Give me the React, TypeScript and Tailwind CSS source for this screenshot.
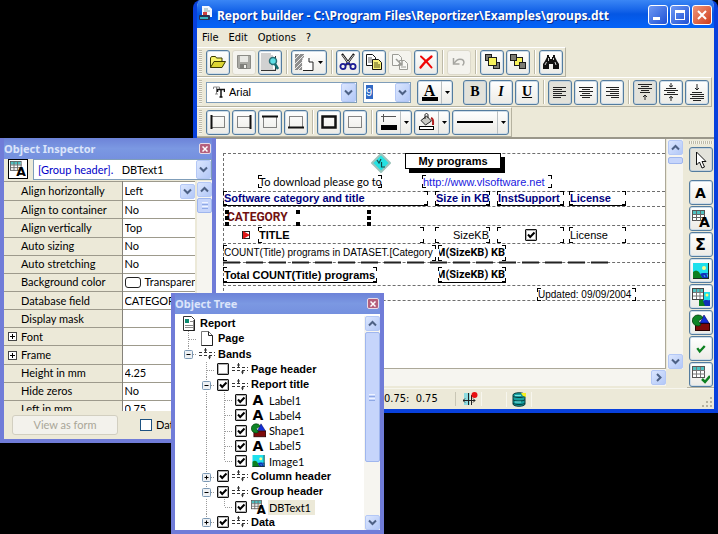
import type { ReactNode } from "react";
import { clsx } from "clsx";

/* ---------- icons ---------- */

const Chevron = ({ dir = "down" }: { dir?: "down" | "up" | "right" }) => (
  <svg viewBox="0 0 9 9" className="h-[9px] w-[9px]" fill="none" stroke="#4d6185" strokeWidth="2">
    {dir === "down" && <path d="M1 2.500 4.500 6 8 2.500" />}
    {dir === "up" && <path d="M1 6.500 4.500 3 8 6.500" />}
    {dir === "right" && <path d="M3 1 6.500 4.500 3 8" />}
  </svg>
);

const AppIcon = () => (
  <svg viewBox="0 0 14 16" className="h-4 w-3.5">
    <path d="M3 0h7l3 3v8H3z" fill="#f4f8ff" />
    <path d="M5 3h4M5 5h6" stroke="#8aa" />
    <rect x="0" y="9" width="11" height="5" rx="1" fill="#2a3350" />
    <rect x="1" y="11" width="8" height="2" fill="#36b5c0" />
    <rect x="4" y="6" width="4" height="3" fill="#d04040" />
  </svg>
);

const OpenIcon = () => (
  <svg viewBox="0 0 18 16" className="h-4 w-[18px]" stroke="#3a3a00" strokeWidth="1">
    <path d="M1.500 13.500V4l1-1.500h4l1 1.500h5.500v3" fill="#f7f36b" />
    <path d="M1.500 13.500 5 7.500h11.500L13 13.500z" fill="#dcd532" />
  </svg>
);

const SaveIcon = () => (
  <svg viewBox="0 0 16 16" className="h-4 w-4">
    <path d="M1.500 1.500h13v13h-12l-1-1z" fill="#a9a9a4" stroke="#8b8b86" />
    <rect x="4" y="2" width="8" height="6" fill="#e8e8e4" />
    <rect x="4" y="10" width="7" height="5" fill="#7f7f7b" />
    <rect x="8" y="11" width="2" height="3" fill="#f2f2ee" />
  </svg>
);

const PreviewIcon = () => (
  <svg viewBox="0 0 20 20" className="h-5 w-5">
    <path d="M1 1h11l3 3v14H1z" fill="#fff" />
    <path d="M1 2h10M1 4h12M1 6h12M1 8h9M1 10h8M1 12h9M1 14h12M1 16h12M1 18h14" stroke="#a3a3a3" />
    <path d="M15.500 4v14M1 18.500h15" stroke="#333" />
    <circle cx="13" cy="9" r="3.500" fill="#5ee0e6" stroke="#2b6f76" strokeWidth="1.500" />
    <path d="m15 12 3 5" stroke="#146b70" strokeWidth="2.500" />
  </svg>
);

const PagesIcon = () => (
  <svg viewBox="0 0 20 18" className="h-[18px] w-5">
    <path d="M1 1h9v6H8v10H1z" fill="#8e8e8e" />
    <path d="m1 6 5-5M1 11 10 2M1 16l9-9M4 17l5-5" stroke="#e9e9e9" />
    <path d="M9 5h6l4 4v8H9z" fill="#fff" stroke="#fff" />
    <path d="M15 5v4h4v8.500H9" fill="none" stroke="#222" />
  </svg>
);

const CutIcon = () => (
  <svg viewBox="0 0 18 18" className="h-[18px] w-[18px]" fill="none">
    <path d="m3 1 8 11M15 1 7 12" stroke="#111" strokeWidth="2.200" />
    <path d="m3.500 2 6 8M14.500 2l-6 8" stroke="#fff" strokeWidth=".8" />
    <ellipse cx="4" cy="13.500" rx="2.600" ry="2.600" stroke="#1c1c96" strokeWidth="1.800" />
    <ellipse cx="14" cy="13.500" rx="2.600" ry="2.600" stroke="#1c1c96" strokeWidth="1.800" />
    <path d="m6 12 3-2 3 2" stroke="#1c1c96" strokeWidth="1.500" />
  </svg>
);

const CopyIcon = () => (
  <svg viewBox="0 0 18 18" className="h-[18px] w-[18px]" stroke="#111">
    <path d="M1.500 1.500h6l3 3v8h-9z" fill="#fff" />
    <path d="M3 5h4M3 7h4M3 9h4" stroke="#666" />
    <path d="M7.500 6.500h6l3 3v7h-9z" fill="#f8f07a" />
    <path d="M9 10h4M9 12h6M9 14h6" stroke="#55551a" />
  </svg>
);

const PasteIcon = () => (
  <svg viewBox="0 0 18 18" className="h-[18px] w-[18px]" stroke="#9b9b96">
    <path d="M1.500 1.500h6l3 3v8h-9z" fill="#f8f8f5" />
    <path d="M8.500 7.500h5l3 3v6h-8z" fill="#f8f8f5" />
    <path d="m5 6 6 6M11 8v4H7" strokeWidth="1.500" fill="none" />
    <path d="M10 14h5" />
  </svg>
);

const DeleteIcon = () => (
  <svg viewBox="0 0 16 16" className="h-4 w-4" stroke="#f00505" fill="none" strokeLinecap="round">
    <path d="M3 2.500C6 5 10 9 13.500 13.500" strokeWidth="2" />
    <path d="M13.500 2.500C9 6 5 10 2.500 13.500" strokeWidth="2.300" />
  </svg>
);

const UndoIcon = () => (
  <svg viewBox="0 0 14 12" className="h-3 w-3.5" stroke="#a5a5a0" fill="none" strokeWidth="1.500">
    <path d="M1.500 2v6h6" />
    <path d="M2 7.500C4 4 7 2.500 10 3.500c2.500 1 2.500 4 .5 6" />
  </svg>
);

const FrontIcon = () => (
  <svg viewBox="0 0 18 18" className="h-[18px] w-[18px]" stroke="#1c1c1c">
    <rect x="2.500" y="1.500" width="6" height="6" fill="#7b7b73" />
    <rect x="10.500" y="9.500" width="6" height="6" fill="#7b7b73" />
    <rect x="5.500" y="4.500" width="8" height="8" fill="#f8f35c" />
  </svg>
);

const BackIcon = () => (
  <svg viewBox="0 0 18 18" className="h-[18px] w-[18px]" stroke="#1c1c1c">
    <rect x="5.500" y="4.500" width="8" height="8" fill="#f8f35c" />
    <rect x="1.500" y="1.500" width="6" height="6" fill="#7b7b73" />
    <rect x="10.500" y="9.500" width="6" height="6" fill="#7b7b73" />
  </svg>
);

const FindIcon = () => (
  <svg viewBox="0 0 16 14" className="h-3.5 w-4">
    <path d="M4 0h2v2h1v2h2V2h1V0h2v2l2 4 2 3v5h-6V9H6v5H0V9l2-3 2-4z" fill="#111" />
    <path d="M3.500 7 2 10M12 7l1 3M5.500 3v3M10.500 3v2" stroke="#cfcfcf" />
  </svg>
);

const TrueTypeIcon = () => (
  <svg viewBox="0 0 12 12" className="h-3 w-3">
    <path d="M.5 3V1h6v2M3.500 1v7M2 8h3" stroke="#888" fill="none" />
    <path d="M4.500 6V3.500h7V6M8 3.500V11M6.500 11h3" stroke="#111" strokeWidth="1.500" fill="none" />
  </svg>
);

type FrameSide = "left" | "right" | "top" | "bottom" | "all" | "none";

const FrameIcon = ({ side }: { side: FrameSide }) => (
  <svg viewBox="0 0 16 14" className="h-3.5 w-4" fill="none" stroke="#111">
    {side === "all" ? (
      <rect x="1.500" y="1.500" width="13" height="11" strokeWidth="2.500" />
    ) : (
      <rect x="1.500" y="1.500" width="13" height="11" strokeDasharray="1 1" />
    )}
    {side === "left" && <path d="M1.500 0v14" strokeWidth="2" />}
    {side === "right" && <path d="M14.500 0v14" strokeWidth="2" />}
    {side === "top" && <path d="M0 1.500h16" strokeWidth="2" />}
    {side === "bottom" && <path d="M0 12.500h16" strokeWidth="2" />}
  </svg>
);

const LineColorIcon = () => (
  <svg viewBox="0 0 18 18" className="h-[18px] w-[18px]">
    <path d="M3.500 1v8M1 3.500h15" stroke="#555" />
    <rect x="1" y="12" width="16" height="5" fill="#000" />
  </svg>
);

const FillIcon = () => (
  <svg viewBox="0 0 18 18" className="h-[18px] w-[18px]">
    <path d="M3 7.500 8.500 3l5 5-6 4z" fill="#c9c9c4" stroke="#222" />
    <path d="M7 6V2c0-2 3-2 3 0v3" fill="none" stroke="#222" />
    <path d="M13 5c3 1 2 4 2 7" fill="none" stroke="#b02020" strokeWidth="2" />
    <rect x="1.500" y="13.500" width="14" height="3" fill="#fff" stroke="#000" />
  </svg>
);

const AlignIcon = ({ side }: { side: "left" | "center" | "right" }) => (
  <svg viewBox="0 0 14 12" className="h-3 w-3.5" stroke="#222" fill="none">
    {side === "left" && <path d="M0 1.500h13M0 3.500h9M0 5.500h13M0 7.500h9M0 9.500h13M0 11.500h8" />}
    {side === "center" && <path d="M0 1.500h14M3 3.500h8M0 5.500h14M3 7.500h8M1 9.500h12M3 11.500h8" />}
    {side === "right" && <path d="M1 1.500h13M5 3.500h9M1 5.500h13M5 7.500h9M1 9.500h13M6 11.500h8" />}
  </svg>
);

const VAlignIcon = ({ side }: { side: "top" | "middle" | "bottom" }) => (
  <svg viewBox="0 0 14 18" className="h-[18px] w-3.5" stroke="#222" fill="none">
    {side === "top" && (
      <>
        <path d="M0 1.500h14M3 3.500h8M0 5.500h14M3 7.500h8M2 9.500h10" />
        <path d="M7 12v5M5 14l2-2 2 2" />
      </>
    )}
    {side === "middle" && (
      <>
        <path d="M2 5.500h10M0 7.500h14M3 9.500h8M0 11.500h14" />
        <path d="M7 0v4M5 2.500l2 1.500 2-1.500M7 18v-5M5 15l2-1.500 2 1.500" />
      </>
    )}
    {side === "bottom" && (
      <>
        <path d="M7 1v6M5 5l2 2 2-2" />
        <path d="M2 9.500h10M0 11.500h14M2 13.500h12M0 15.500h14M3 17.500h8" />
      </>
    )}
  </svg>
);

const PointerIcon = () => (
  <svg viewBox="0 0 12 18" className="h-[18px] w-3">
    <path d="M1.500 1v13l3-3 2.500 6 2.500-1L7 10.500h4z" fill="#fff" stroke="#111" />
  </svg>
);

const DbTextIcon = ({ className }: { className?: string }) => (
  <svg viewBox="0 0 18 18" className={className}>
    <rect x=".5" y=".5" width="12" height="10" fill="#fff" stroke="#555" />
    <rect x="1" y="1" width="11" height="3" fill="#4fc0c0" />
    <path d="M1 4.500h12M1 7.500h12M4.500 1v10M8.500 1v10" stroke="#666" />
    <text x="7" y="17" fontFamily="DejaVu Sans, sans-serif" fontWeight="bold" fontSize="14">A</text>
  </svg>
);

const ImageIcon = ({ className }: { className?: string }) => (
  <svg viewBox="0 0 16 16" className={className}>
    <rect width="16" height="16" fill="#1fe0ec" />
    <circle cx="11" cy="5" r="2" fill="#fbfb90" />
    <path d="M0 9c2-2 4-2 6 0l4 7H0z" fill="#0b8020" />
    <path d="M7 11c3-2 6 0 9-1v6h-6z" fill="#1330b8" />
    <path d="m11 12 1 2m2-3 1 3" stroke="#2cc8e8" />
    <path d="M0 15.500h16M15.500 0v16" stroke="#1a3020" />
  </svg>
);

const DbImageIcon = () => (
  <svg viewBox="0 0 18 18" className="h-[18px] w-[18px]">
    <rect x="7" y="4" width="11" height="14" fill="#1fe0ec" />
    <path d="M7 12c2-2 4-1 5 2l2 4H7z" fill="#0b8020" />
    <path d="M11 13c3-2 4 0 7-1v6h-5z" fill="#1330b8" />
    <circle cx="15" cy="7" r="1.500" fill="#fbfb70" />
    <rect x=".5" y=".5" width="11" height="11" fill="#fff" stroke="#444" />
    <rect x="1" y="1" width="10" height="3" fill="#4fc0c0" />
    <path d="M1 4.500h10M1 8h10M4.500 1v10M8 1v10" stroke="#777" />
  </svg>
);

const ShapeIcon = ({ className }: { className?: string }) => (
  <svg viewBox="0 0 18 18" className={className}>
    <rect x="3.500" y="9.500" width="14" height="7" fill="#7d0a0a" stroke="#2a0000" />
    <path d="m12 1 5 8H8z" fill="#1230d8" stroke="#000060" strokeWidth=".6" />
    <path d="M6 1a5.500 5.500 0 1 0 3 10L6.500 7 11 3.500A5.500 5.500 0 0 0 6 1z" fill="#0e8526" stroke="#033b0c" strokeWidth=".8" />
  </svg>
);

const CheckIcon = () => (
  <svg viewBox="0 0 12 12" className="h-2.5 w-2.5" fill="none" stroke="#0c8020" strokeWidth="2.800">
    <path d="m1.500 5 3 4L10.500 2.500" />
  </svg>
);

const DbCheckIcon = () => (
  <svg viewBox="0 0 18 18" className="h-[18px] w-[18px]">
    <rect x=".5" y=".5" width="12" height="11" fill="#fff" stroke="#555" />
    <rect x="1" y="1" width="11" height="3" fill="#4fc0c0" />
    <path d="M1 4.500h12M1 8h12M4.500 1v10M8.500 1v10" stroke="#777" />
    <path d="m10 13 3 3 5-6" fill="none" stroke="#0c8020" strokeWidth="2.500" />
  </svg>
);

const ReportIcon = () => (
  <svg viewBox="0 0 12 15" className="h-[15px] w-3">
    <path d="M.5.5h8l3 3v11H.5z" fill="#fff" stroke="#333" />
    <rect x="2" y="3" width="4" height="4" fill="#0c8a70" />
    <path d="M7 5.500h3M2 9.500h8M2 11.500h8" stroke="#888" />
    <path d="M11 4v11H1" stroke="#111" fill="none" />
  </svg>
);

const PageIcon = () => (
  <svg viewBox="0 0 12 15" className="h-[15px] w-3">
    <path d="M.5.5h7l4 4v10H.5z" fill="#fff" stroke="#777" />
    <path d="M7.500.5v4h4v10H.5" stroke="#222" fill="none" />
  </svg>
);

const BandIcon = () => (
  <svg viewBox="0 0 16 12" className="h-3 w-4" stroke="#333" fill="none">
    <path d="M0 4.500h16M0 7.500h16" strokeDasharray="3 2" />
    <path d="M6.500 0v5M5 2h3M10.500 7v4" />
    <path d="M9 8.500h3l-1.500 3z" fill="#333" stroke="none" />
  </svg>
);

const LetterA = () => <span className="font-['DejaVu_Sans'] text-sm leading-none font-bold">A</span>;

/* ---------- shared controls ---------- */

const Checkbox = ({ id, checked = false, label }: { id: string; checked?: boolean; label: string }) => (
  <span className="grid h-3 w-3 shrink-0">
    <input
      id={id}
      type="checkbox"
      aria-label={label}
      defaultChecked={checked}
      className="peer col-start-1 row-start-1 m-0 h-3 w-3 appearance-none rounded-[1px] border border-[#111] bg-white shadow-[inset_0_0_0_1px_#b0b0b0]"
    />
    <svg viewBox="0 0 12 12" className="pointer-events-none invisible col-start-1 row-start-1 h-3 w-3 peer-checked:visible">
      <path d="m3 5.500 2.200 2.500L9.500 3.500" fill="none" stroke="#000" strokeWidth="2" />
    </svg>
  </span>
);

type ToolState = "normal" | "pressed" | "disabled";

const ToolButton = ({ label, state = "normal", children }: { label: string; state?: ToolState; children: ReactNode }) => (
  <button
    type="button"
    aria-label={label}
    disabled={state === "disabled"}
    className={clsx(
      "flex h-[25px] w-6 shrink-0 items-center justify-center rounded-[3px]",
      state === "normal" && "border border-[#547c9f] bg-linear-to-b from-white to-[#ecebe6] shadow-[inset_0_0_0_1px_#cfdde8]",
      state === "pressed" && "border border-[#547c9f] bg-[#e3e2da] shadow-[inset_0_0_0_1px_#c6d2da]",
      state === "disabled" && "border border-[#dcd9cb] bg-[#f4f3ee]",
    )}
  >
    {children}
  </button>
);

const SplitButton = ({ label, width, divided = true, children }: { label: string; width: string; divided?: boolean; children: ReactNode }) => (
  <button
    type="button"
    aria-label={label}
    className={clsx(
      "flex h-[25px] shrink-0 items-stretch rounded-[3px] border border-[#547c9f] bg-linear-to-b from-white to-[#ecebe6] shadow-[inset_0_0_0_1px_#cfdde8]",
      width,
    )}
  >
    <span className="flex flex-1 items-center justify-center">{children}</span>
    <span className={clsx("flex w-[11px] items-center justify-center", divided && "border-l border-[#b9bfc2]")}>
      <svg viewBox="0 0 5 3" className="h-[3px] w-[5px]">
        <path d="M0 0h5L2.500 3z" />
      </svg>
    </span>
  </button>
);

const Separator = () => <span className="mr-px ml-[2px] h-6 w-[2px] border-r border-l border-r-white border-l-[#bdbaa8]" />;

const Grip = () => (
  <span className="mr-[2px] h-6 w-[3px] bg-[repeating-linear-gradient(180deg,#bebba9_0_1px,#f5f4ec_1px_2px)]" />
);

const Toolbar = ({ label, children }: { label: string; children: ReactNode }) => (
  <div
    role="toolbar"
    aria-label={label}
    className="flex h-[30px] w-fit items-center gap-[2px] border-t border-r border-b border-t-white border-r-[#b5b2a0] border-b-[#b5b2a0] pr-[2px] pl-[2px]"
  >
    <Grip />
    {children}
  </div>
);

const DropArrow = ({ label, className }: { label: string; className?: string }) => (
  <button
    type="button"
    aria-label={label}
    className={clsx(
      "flex w-[15px] shrink-0 items-center justify-center rounded-[2px] border border-[#b4c8f6] bg-linear-to-br from-[#dbe6fe] to-[#b3c8f7]",
      className,
    )}
  >
    <Chevron />
  </button>
);

const ScrollButton = ({ dir }: { dir: "up" | "down" | "right" }) => (
  <button
    type="button"
    aria-label={`Scroll ${dir}`}
    className="flex h-[15px] w-[15px] shrink-0 items-center justify-center rounded-[2px] border border-[#b4c8f6] bg-linear-to-br from-[#dbe6fe] to-[#b3c8f7]"
  >
    <Chevron dir={dir} />
  </button>
);

const ScrollThumb = ({ height }: { height: string }) => (
  <div className={clsx("flex w-[15px] flex-col items-center justify-center gap-px rounded-[2px] border border-[#9fb6ee] bg-[#c6d5fb]", height)}>
    {height !== "h-[7px]" && (
      <>
        <span className="h-px w-1.5 bg-[#eef3ff]" />
        <span className="h-px w-1.5 bg-[#8fa9e6]" />
        <span className="h-px w-1.5 bg-[#eef3ff]" />
        <span className="h-px w-1.5 bg-[#8fa9e6]" />
      </>
    )}
  </div>
);

const ToolWindow = ({ title, className, children }: { title: string; className: string; children: ReactNode }) => (
  <section className={clsx("absolute flex flex-col border-x-4 border-b-4 border-[#707cd8] bg-[#ece9d8] font-['Lato','Liberation_Sans',sans-serif]", className)}>
    <header className="flex h-[21px] shrink-0 items-center justify-between bg-linear-to-b from-[#6d83d8] via-[#7b98e2] to-[#7590df] pr-px">
      <h2 className="font-['Noto_Sans',sans-serif] text-[11px] font-bold text-[#dbe4fa]">{title}</h2>
      <button
        type="button"
        aria-label={`Close ${title}`}
        className="flex h-[11px] w-3 items-center justify-center rounded-[2px] border border-[#e8dbe8] bg-[#b5607c]"
      >
        <svg viewBox="0 0 6 6" className="h-1.5 w-1.5" stroke="#fff" strokeWidth="1.500">
          <path d="m.5.5 5 5M5.500.5l-5 5" />
        </svg>
      </button>
    </header>
    {children}
  </section>
);

/* ---------- main window ---------- */

const TitleBar = () => (
  <header className="flex h-7 items-center gap-1 bg-linear-to-b from-[#3a86f5] via-[#0557e4] to-[#0463f8] pr-[2px] pl-[2px]">
    <AppIcon />
    <h1 className="min-w-0 flex-1 pt-1 font-['Noto_Sans',sans-serif] text-xs font-bold whitespace-nowrap text-white [text-shadow:1px_1px_#0a2f8f]">
      Report builder - C:\Program Files\Reportizer\Examples\groups.dtt
    </h1>
    <div className="flex shrink-0 gap-[2px] pt-px">
      <button type="button" aria-label="Minimize" className="flex h-5 w-5 items-end justify-start rounded-[3px] border border-white bg-linear-to-br from-[#6f98f3] to-[#1f4fd4] p-1">
        <span className="h-[3px] w-[7px] bg-white" />
      </button>
      <button type="button" aria-label="Maximize" className="flex h-5 w-5 items-center justify-center rounded-[3px] border border-white bg-linear-to-br from-[#6f98f3] to-[#1f4fd4]">
        <span className="h-2.5 w-2.5 border border-t-[3px] border-white" />
      </button>
      <button type="button" aria-label="Close" className="flex h-5 w-5 items-center justify-center rounded-[3px] border border-white bg-linear-to-br from-[#ee9478] to-[#cf3a14]">
        <svg viewBox="0 0 10 10" className="h-2.5 w-2.5" stroke="#fff" strokeWidth="2">
          <path d="m1 1 8 8M9 1 1 9" />
        </svg>
      </button>
    </div>
  </header>
);

const Toolbars = () => (
  <div>
    <Toolbar label="Standard">
      <ToolButton label="Open"><OpenIcon /></ToolButton>
      <ToolButton label="Save" state="disabled"><SaveIcon /></ToolButton>
      <ToolButton label="Preview"><PreviewIcon /></ToolButton>
      <Separator />
      <SplitButton label="Page" width="w-9" divided={false}><PagesIcon /></SplitButton>
      <Separator />
      <ToolButton label="Cut"><CutIcon /></ToolButton>
      <ToolButton label="Copy"><CopyIcon /></ToolButton>
      <ToolButton label="Paste" state="disabled"><PasteIcon /></ToolButton>
      <ToolButton label="Delete"><DeleteIcon /></ToolButton>
      <Separator />
      <ToolButton label="Undo" state="disabled"><UndoIcon /></ToolButton>
      <Separator />
      <ToolButton label="Bring to front"><FrontIcon /></ToolButton>
      <ToolButton label="Send to back"><BackIcon /></ToolButton>
      <Separator />
      <ToolButton label="Find"><FindIcon /></ToolButton>
    </Toolbar>

    <Toolbar label="Formatting">
      <div className="mr-1 flex h-[21px] w-[151px] items-center gap-1 border border-[#7f9db9] bg-white pl-1.5">
        <TrueTypeIcon />
        <input aria-label="Font" defaultValue="Arial" className="min-w-0 flex-1 outline-none" />
        <DropArrow label="Choose font" className="h-[19px]" />
      </div>
      <div className="mr-1 flex h-[21px] w-12 items-center justify-between border border-[#7f9db9] bg-white pl-[2px]">
        <input aria-label="Font size" defaultValue="9" className="h-3.5 w-[7px] bg-[#316ac5] text-white outline-none" />
        <DropArrow label="Choose size" className="h-[19px]" />
      </div>
      <SplitButton label="Font color" width="w-9">
        <span className="flex flex-col items-center">
          <span className="font-['Liberation_Serif',serif] text-base leading-[13px] font-bold">A</span>
          <span className="h-1 w-4 bg-black" />
        </span>
      </SplitButton>
      <span className="w-1.5" />
      <ToolButton label="Bold" state="pressed"><span className="font-['Liberation_Serif',serif] text-sm font-bold">B</span></ToolButton>
      <ToolButton label="Italic"><span className="font-['Liberation_Serif',serif] text-sm font-bold italic">I</span></ToolButton>
      <ToolButton label="Underline"><span className="font-['Liberation_Serif',serif] text-sm font-bold underline">U</span></ToolButton>
      <Separator />
      <ToolButton label="Align left" state="pressed"><AlignIcon side="left" /></ToolButton>
      <ToolButton label="Align center"><AlignIcon side="center" /></ToolButton>
      <ToolButton label="Align right"><AlignIcon side="right" /></ToolButton>
      <Separator />
      <ToolButton label="Align top" state="pressed"><VAlignIcon side="top" /></ToolButton>
      <ToolButton label="Align middle"><VAlignIcon side="middle" /></ToolButton>
      <ToolButton label="Align bottom"><VAlignIcon side="bottom" /></ToolButton>
    </Toolbar>

    <Toolbar label="Frame">
      <ToolButton label="Left frame"><FrameIcon side="left" /></ToolButton>
      <ToolButton label="Right frame"><FrameIcon side="right" /></ToolButton>
      <ToolButton label="Top frame"><FrameIcon side="top" /></ToolButton>
      <ToolButton label="Bottom frame"><FrameIcon side="bottom" /></ToolButton>
      <Separator />
      <ToolButton label="Full frame"><FrameIcon side="all" /></ToolButton>
      <ToolButton label="No frame"><FrameIcon side="none" /></ToolButton>
      <Separator />
      <SplitButton label="Line color" width="w-9"><LineColorIcon /></SplitButton>
      <SplitButton label="Fill color" width="w-9"><FillIcon /></SplitButton>
      <SplitButton label="Line width" width="w-[57px]"><span className="h-[2px] w-9 bg-black" /></SplitButton>
    </Toolbar>
  </div>
);

/* Report items sit at free positions on the designer canvas. */

const Band = ({ at }: { at: string }) => (
  <span className={clsx("absolute right-0 left-[26px] border-t border-dashed border-[#6e6e6e]", at)} />
);

const Field = ({ at, underline = false, children }: { at: string; underline?: boolean; children: ReactNode }) => (
  <div className={clsx("absolute flex items-center px-px whitespace-nowrap", underline && "border-b border-black", at)}>
    <span className="absolute top-0 left-0 h-1 w-1 border-t border-l border-black" />
    <span className="absolute top-0 right-0 h-1 w-1 border-t border-r border-black" />
    <span className="absolute bottom-0 left-0 h-1 w-1 border-b border-l border-black" />
    <span className="absolute right-0 bottom-0 h-1 w-1 border-r border-b border-black" />
    {children}
  </div>
);

const Handle = ({ at }: { at: string }) => <span className={clsx("absolute h-1 w-1 bg-black", at)} />;

/* The expression is wider than its field, so its start is hidden. */
const SizeTotal = () => (
  <b className="flex min-w-0 flex-1 justify-end overflow-hidden font-['Roboto',sans-serif]">
    <span>M(SizeKB) KB</span>
  </b>
);

const Canvas = () => (
  <div className="relative h-[230px] min-w-0 flex-1 overflow-hidden border-r border-b border-[#aca899] bg-white font-['Liberation_Sans',sans-serif] text-[11px]">
    <span className="absolute top-[14px] left-[26px] h-[148px] border-l border-dashed border-[#6e6e6e]" />
    <Band at="top-[14px]" />
    <Band at="top-[52px]" />
    <Band at="top-[67px]" />
    <Band at="top-[86px]" />
    <Band at="top-[104px]" />
    <Band at="top-[123px]" />
    <Band at="top-[146px]" />
    <Band at="top-[161px]" />

    <svg viewBox="0 0 20 20" className="absolute top-[14px] left-[174px] h-5 w-5">
      <path d="M10 1 19 10 10 19 1 10z" fill="#25e2e2" stroke="#9cc4bc" strokeWidth="2" strokeLinejoin="round" />
      <path d="m6 7 2 3 2-4M10.500 9v5h3.500" fill="none" stroke="#134a4a" strokeWidth="1.200" />
    </svg>
    <div className="absolute top-[14px] left-[208px] flex h-4 w-24 items-center justify-center border border-black bg-white font-bold shadow-[4px_4px_#000]">
      My programs
    </div>

    <Field at="top-[36px] left-[61px] h-[13px] w-[124px]">
      <span className="font-['Lato',sans-serif]">To download please go to</span>
    </Field>
    <Field at="top-[36px] left-[225px] h-[13px] w-[130px]">
      <a href="http://www.vlsoftware.net" className="text-[#2020e0]">http://www.vlsoftware.net</a>
    </Field>

    <Field at="top-[52px] left-[26px] h-[15px] w-[205px]" underline><b className="text-[#000080]">Software category and title</b></Field>
    <Field at="top-[52px] left-[238px] h-[15px] w-[55px]" underline><b className="text-[#000080]">Size in KB</b></Field>
    <Field at="top-[52px] left-[300px] h-[15px] w-[67px]" underline><b className="text-[#000080]">InstSupport</b></Field>
    <Field at="top-[52px] left-[372px] h-[15px] w-[57px]" underline><b className="text-[#000080]">License</b></Field>

    <div className="absolute top-[70px] left-[30px] flex h-4 items-center font-['Roboto',sans-serif] text-xs font-bold text-[#701010]">CATEGORY</div>
    <Handle at="top-[71px] left-[28px]" />
    <Handle at="top-[77px] left-[28px]" />
    <Handle at="top-[83px] left-[28px]" />
    <Handle at="top-[71px] left-[99px]" />
    <Handle at="top-[83px] left-[99px]" />
    <Handle at="top-[71px] left-[170px]" />
    <Handle at="top-[77px] left-[170px]" />
    <Handle at="top-[83px] left-[170px]" />

    <svg viewBox="0 0 8 8" className="absolute top-[92px] left-[45px] h-2 w-2">
      <rect x=".5" y=".5" width="7" height="7" fill="#fff" stroke="#222" />
      <path d="m1 0 7 4-7 4z" fill="#e01818" />
    </svg>
    <Field at="top-[88px] left-[61px] h-4 w-[166px]"><b>TITLE</b></Field>
    <Field at="top-[88px] left-[238px] h-4 w-[55px] justify-end">SizeKB</Field>
    <Field at="top-[88px] left-[300px] h-4 w-[67px] justify-center">
      <Checkbox id="inst-support" label="InstSupport" checked />
    </Field>
    <Field at="top-[88px] left-[372px] h-4 w-[57px]">License</Field>

    <Field at="top-[106px] left-[26px] h-4 w-[213px]">
      <span className="text-[10px]">COUNT(Title) programs in DATASET.[Category</span>
    </Field>
    <Field at="top-[106px] left-[241px] h-4 w-[68px]"><SizeTotal /></Field>
    <svg className="absolute top-[122px] left-[26px] h-[3px] w-[390px]" stroke="#222">
      <path d="M0 1.500h390" strokeWidth="2" strokeDasharray="17 6" />
    </svg>
    <Field at="top-[128px] left-[26px] h-4 w-[154px]" underline><b>Total COUNT(Title) programs</b></Field>
    <Field at="top-[128px] left-[241px] h-4 w-[68px]" underline><SizeTotal /></Field>
    <Field at="top-[149px] left-[340px] h-[13px] w-[99px]">
      <span className="text-[10px]">Updated: 09/09/2004</span>
    </Field>
  </div>
);

const Palette = () => (
  <div role="toolbar" aria-label="Report items" className="ml-1 flex w-[27px] shrink-0 flex-col items-center gap-px border-b border-[#b5b2a0] pt-[2px]">
    <span className="mb-[2px] h-[3px] w-6 bg-[repeating-linear-gradient(90deg,#bebba9_0_1px,#f5f4ec_1px_2px)]" />
    <ToolButton label="Select" state="pressed"><PointerIcon /></ToolButton>
    <span className="h-1.5" />
    <ToolButton label="Label"><LetterA /></ToolButton>
    <ToolButton label="Database text"><DbTextIcon className="h-[18px] w-[18px]" /></ToolButton>
    <ToolButton label="Expression"><span className="font-['DejaVu_Sans',sans-serif] text-base leading-none font-bold">Σ</span></ToolButton>
    <ToolButton label="Image"><ImageIcon className="h-4 w-4" /></ToolButton>
    <ToolButton label="Database image"><DbImageIcon /></ToolButton>
    <ToolButton label="Shape"><ShapeIcon className="h-[18px] w-[18px]" /></ToolButton>
    <ToolButton label="Check box"><CheckIcon /></ToolButton>
    <ToolButton label="Database check box"><DbCheckIcon /></ToolButton>
  </div>
);

const StatusBar = () => (
  <footer className="flex h-[21px] items-center border-t border-[#f7f6ee] font-['DejaVu_Sans_Condensed','DejaVu_Sans',sans-serif] text-[11px]">
    <span className="w-[259px] border-r border-[#c9c6b5] pl-[187px] whitespace-pre">0.75:  0.75</span>
    <span className="flex w-[26px] justify-center border-r border-[#f7f6ee] pl-1">
      <svg viewBox="0 0 15 14" className="h-3.5 w-[15px]">
        <path d="M1 1h6v12H1z" fill="#8fdce0" />
        <path d="M5.500 1v12M8.500 3v10M0 8.500h12M2 6.500 0 8.500l2 2M10 6.500l2 2-2 2" stroke="#222" fill="none" />
        <circle cx="11.500" cy="3" r="3" fill="#e81010" />
      </svg>
    </span>
    <span className="ml-6 flex w-[26px] justify-center border-r border-l border-[#f7f6ee]">
      <svg viewBox="0 0 15 15" className="h-[15px] w-[15px]">
        <path d="M1 3v9c0 3 12 3 12 0V3c0-3-12-3-12 0z" fill="#18a0a0" stroke="#083838" />
        <path d="M1 4c1 2 11 2 12 0M1 7.500c1 2 11 2 12 0M1 11c1 2 11 2 12 0" fill="none" stroke="#063c3c" />
        <path d="M3 3.500h6M3 10h6" stroke="#7fe4e4" />
        <path d="M9 1h5v4l-3-1z" fill="#f4f020" />
      </svg>
    </span>
    <span className="flex-1" />
    <svg viewBox="0 0 12 12" className="mt-1.5 mr-px h-3 w-3" fill="#b5b2a0">
      <path d="M9 1h2v2H9zM9 5h2v2H9zM5 5h2v2H5zM9 9h2v2H9zM5 9h2v2H5zM1 9h2v2H1z" />
    </svg>
  </footer>
);

const ReportBuilder = () => (
  <main className="absolute top-0 right-0 left-[193px] overflow-hidden rounded-t-lg border-x-4 border-b-4 border-[#0840dc] bg-[#ece9d8]">
    <TitleBar />
    <nav className="flex h-[19px] items-center gap-2.5 pl-[5px] font-['DejaVu_Sans_Condensed','DejaVu_Sans',sans-serif]">
      <button type="button">File</button>
      <button type="button">Edit</button>
      <button type="button">Options</button>
      <button type="button">?</button>
    </nav>
    <Toolbars />
    <div className="flex border-t-2 border-[#9a978a]">
      <div className="min-w-0 flex-1">
        <div className="flex">
          <Canvas />
          <div className="ml-px flex w-4 flex-col items-center gap-[2px] bg-[#f6f5f0] pt-px">
            <ScrollButton dir="up" />
            <ScrollThumb height="h-[7px]" />
            <span className="flex-1" />
            <ScrollButton dir="down" />
          </div>
        </div>
        <div className="flex h-[17px]">
          <div className="flex flex-1 items-center justify-end bg-[#f6f5f0]">
            <ScrollButton dir="right" />
          </div>
          <span className="w-[17px]" />
        </div>
      </div>
      <Palette />
    </div>
    <StatusBar />
  </main>
);

/* ---------- object inspector ---------- */

const properties = [
  { name: "Align horizontally", value: "Left" },
  { name: "Align to container", value: "No" },
  { name: "Align vertically", value: "Top" },
  { name: "Auto sizing", value: "No" },
  { name: "Auto stretching", value: "No" },
  { name: "Background color", value: "Transparent", swatch: true },
  { name: "Database field", value: "CATEGORY" },
  { name: "Display mask", value: "" },
  { name: "Font", value: "", group: true },
  { name: "Frame", value: "", group: true },
  { name: "Height in mm", value: "4.25" },
  { name: "Hide zeros", value: "No" },
  { name: "Left in mm", value: "0.75" },
];

const ObjectInspector = () => (
  <ToolWindow title="Object Inspector" className="top-[138px] left-0 w-[216px]">
    <div className="flex h-[22px] items-start gap-[5px] pl-1">
      <button type="button" aria-label="Selected object" className="flex h-5 w-5 shrink-0 items-center justify-center border border-black bg-white">
        <DbTextIcon className="h-4 w-4" />
      </button>
      <div className="flex h-[21px] min-w-0 flex-1 items-center border border-[#7f9db9] bg-white pl-1">
        <span className="flex-1 whitespace-pre"><span className="text-[#0000c8]">[Group header].</span>   DBText1</span>
        <DropArrow label="Choose object" className="h-[19px]" />
      </div>
    </div>

    <div className="flex h-[230px] overflow-hidden">
      <div className="min-w-0 flex-1 overflow-hidden">
        <table className="h-[237px] w-full table-fixed border-collapse">
          <tbody>
            {properties.map((p, i) => (
              <tr key={p.name} className="border-t border-[#9d9a8c]">
                <th scope="row" className="w-[118px] border-r border-[#85827a] p-0 text-left font-normal">
                  <span className="flex items-center">
                    <span className="flex w-[17px] justify-center">
                      {p.group && (
                        <button type="button" aria-label={`Expand ${p.name}`} className="h-[9px] w-[9px] border border-[#444] bg-white">
                          <svg viewBox="0 0 7 7" className="h-[7px] w-[7px]" stroke="#000"><path d="M1 3.500h5M3.500 1v5" /></svg>
                        </button>
                      )}
                    </span>
                    {p.name}
                  </span>
                </th>
                <td className="bg-white p-0 pl-[2px] whitespace-nowrap">
                  {i === 0 ? (
                    <span className="flex items-center">
                      <select aria-label={p.name} className="min-w-0 flex-1 appearance-none outline-none">
                        <option>Left</option>
                        <option>Center</option>
                        <option>Right</option>
                      </select>
                      <DropArrow label="Choose alignment" className="h-[15px]" />
                    </span>
                  ) : (
                    <span className="flex items-center gap-1 overflow-hidden">
                      {p.swatch && <span className="h-[11px] w-4 shrink-0 rounded-[3px] border border-[#222]" />}
                      {p.value}
                    </span>
                  )}
                </td>
              </tr>
            ))}
          </tbody>
        </table>
      </div>
      <div className="ml-[2px] flex w-[15px] flex-col gap-px bg-[#f6f5f0] pt-px">
        <ScrollButton dir="up" />
        <ScrollThumb height="h-[15px]" />
      </div>
    </div>

    <div className="flex h-7 items-center gap-[22px] pl-2">
      <button type="button" disabled className="h-5 w-[106px] rounded-[3px] border border-[#d2cfc0] bg-[#f3f2ec] text-[#a9a698]">View as form</button>
      <label className="flex items-center gap-1 whitespace-nowrap">
        <input type="checkbox" className="m-0 h-3 w-3 appearance-none border border-[#1d5281] bg-white" />
        Data
      </label>
    </div>
  </ToolWindow>
);

/* ---------- object tree ---------- */

type Cell = "line" | "branch" | "last" | "blank" | "plus" | "minus";

type Node = {
  name: string;
  cells: Cell[];
  icon: ReactNode;
  check?: boolean;
  bold?: boolean;
  selected?: boolean;
};

const nodes: Node[] = [
  { name: "Report", cells: [], icon: <ReportIcon />, bold: true },
  { name: "Page", cells: ["branch"], icon: <PageIcon />, bold: true },
  { name: "Bands", cells: ["minus"], icon: <BandIcon />, bold: true },
  { name: "Page header", cells: ["blank", "branch"], icon: <BandIcon />, check: false, bold: true },
  { name: "Report title", cells: ["blank", "minus"], icon: <BandIcon />, check: true, bold: true },
  { name: "Label1", cells: ["blank", "line", "branch"], icon: <LetterA />, check: true },
  { name: "Label4", cells: ["blank", "line", "branch"], icon: <LetterA />, check: true },
  { name: "Shape1", cells: ["blank", "line", "branch"], icon: <ShapeIcon className="h-[15px] w-[15px]" />, check: true },
  { name: "Label5", cells: ["blank", "line", "branch"], icon: <LetterA />, check: true },
  { name: "Image1", cells: ["blank", "line", "last"], icon: <ImageIcon className="h-3 w-[13px]" />, check: true },
  { name: "Column header", cells: ["blank", "plus"], icon: <BandIcon />, check: true, bold: true },
  { name: "Group header", cells: ["blank", "minus"], icon: <BandIcon />, check: true, bold: true },
  { name: "DBText1", cells: ["blank", "line", "last"], icon: <DbTextIcon className="h-[15px] w-[15px]" />, check: true, selected: true },
  { name: "Data", cells: ["blank", "plus"], icon: <BandIcon />, check: true, bold: true },
];

const TreeCell = ({ kind }: { kind: Cell }) => (
  <span className="flex w-[18px] shrink-0 items-center justify-center self-stretch">
    <svg viewBox="0 0 18 16" className="h-4 w-[18px]" stroke="#9a9a9a" fill="none">
      {kind === "line" && <path d="M9.500 0v16" strokeDasharray="1 1" />}
      {kind === "branch" && <path d="M9.500 0v16M10 8.500h8" strokeDasharray="1 1" />}
      {kind === "last" && <path d="M9.500 0v8M10 8.500h8" strokeDasharray="1 1" />}
      {(kind === "plus" || kind === "minus") && (
        <>
          <path d="M9.500 0v4M14 8.500h4" strokeDasharray="1 1" />
          <rect x="5.500" y="4.500" width="8" height="8" rx="1" fill="#eef1f4" stroke="#7b98b4" />
          <path d="M7.500 8.500h4" stroke="#000" />
          {kind === "plus" && <path d="M9.500 6.500v4" stroke="#000" />}
        </>
      )}
    </svg>
  </span>
);

const ObjectTree = () => (
  <ToolWindow title="Object Tree" className="top-[293px] left-[171px] w-[213px]">
    <div className="flex bg-white pt-[2px]">
      <ul className="grid h-[214px] min-w-0 flex-1 auto-rows-fr pl-1">
        {nodes.map((n) => (
          <li key={n.name} className="flex min-h-0 items-center">
            {n.cells.map((c, i) => {
              // the second column's line runs on past nested items
              const kind = n.cells.length === 3 && i === 1 ? "line" : c;
              return <TreeCell key={i} kind={kind} />;
            })}
            {n.check !== undefined && (
              <span className="mr-px ml-[2px]">
                <Checkbox id={`show-${n.name}`} label={n.name} checked={n.check} />
              </span>
            )}
            <span className="flex w-5 shrink-0 items-center justify-center">{n.icon}</span>
            <span
              className={clsx(
                "px-px leading-[15px] whitespace-nowrap",
                n.bold && "font-['Liberation_Sans',sans-serif] font-bold",
                n.selected && "bg-[#ece9d8] pr-1",
              )}
            >
              {n.name}
            </span>
          </li>
        ))}
      </ul>
      <div className="flex w-4 flex-col items-center gap-px bg-[#f6f5f0]">
        <ScrollButton dir="up" />
        <ScrollThumb height="h-[130px]" />
        <span className="flex-1" />
        <ScrollButton dir="down" />
      </div>
    </div>
  </ToolWindow>
);

export default function App() {
  return (
    <div className="relative min-h-screen overflow-hidden bg-black font-['Liberation_Sans',sans-serif] text-[11px] leading-[14px] text-black">
      <ReportBuilder />
      <ObjectInspector />
      <ObjectTree />
    </div>
  );
}
